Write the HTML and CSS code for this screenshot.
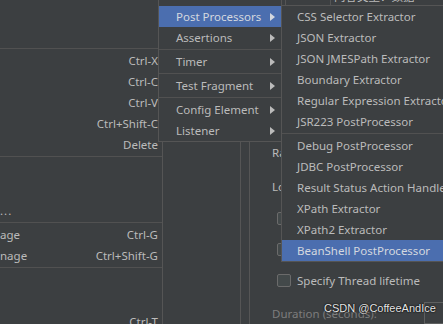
FILE: index.html
```html
<!DOCTYPE html>
<html lang="en">
<head>
    <meta charset="UTF-8">
    <meta name="viewport" content="width=device-width, initial-scale=1.0">
    <title>Thread Group - Add Post Processor</title>
    <link rel="stylesheet" href="styles.css">
</head>
<body>
    <!-- the editor behind the popup menus -->
    <div class="workspace">
        <div class="tree-pane"></div>
        <div class="splitter"></div>
        <div class="config-pane">
            <div class="table-strip">
                <div class="cell cell-a"></div>
                <div class="cell cell-b"></div>
                <div class="cell cell-c">内容类型：数据</div>
            </div>
            <div class="config-form">
                <div class="field-row">Number of Threads (users):</div>
                <div class="field-row">Ramp-up period (seconds):</div>
                <div class="field-row">Loop Count:</div>
                <div class="check-row"><span class="check-box"></span>Same user on each iteration</div>
                <div class="check-row"><span class="check-box"></span>Delay Thread creation until needed</div>
                <div class="check-row"><span class="check-box"></span>Specify Thread lifetime</div>
                <div class="duration-row">
                    <span class="duration-label">Duration (seconds):</span>
                    <span class="text-field"></span>
                </div>
            </div>
        </div>
    </div>

    <!-- right click menu -->
    <div class="menu edit-menu">
        <div class="menu-spacer"></div>
        <div class="menu-separator"></div>
        <div class="menu-item"><span></span><span>Ctrl-X</span></div>
        <div class="menu-item"><span></span><span>Ctrl-C</span></div>
        <div class="menu-item"><span></span><span>Ctrl-V</span></div>
        <div class="menu-item"><span></span><span>Ctrl+Shift-C</span></div>
        <div class="menu-item"><span></span><span>Delete</span></div>
        <div class="menu-separator"></div>
        <div class="menu-item"></div>
        <div class="menu-item"></div>
        <div class="menu-item"><span class="cut-label">...</span></div>
        <div class="menu-separator"></div>
        <div class="menu-item"><span>age</span><span>Ctrl-G</span></div>
        <div class="menu-item"><span>nage</span><span>Ctrl+Shift-G</span></div>
        <div class="menu-separator"></div>
        <div class="menu-item"></div>
        <div class="menu-item"></div>
        <div class="menu-item"><span></span><span>Ctrl-T</span></div>
    </div>

    <!-- Add submenu -->
    <div class="menu add-menu">
        <div class="menu-item"><span>Pre Processors</span><span class="submenu-arrow"></span></div>
        <div class="menu-item selected"><span>Post Processors</span><span class="submenu-arrow"></span></div>
        <div class="menu-item"><span>Assertions</span><span class="submenu-arrow"></span></div>
        <div class="menu-separator"></div>
        <div class="menu-item"><span>Timer</span><span class="submenu-arrow"></span></div>
        <div class="menu-separator"></div>
        <div class="menu-item"><span>Test Fragment</span><span class="submenu-arrow"></span></div>
        <div class="menu-separator"></div>
        <div class="menu-item"><span>Config Element</span><span class="submenu-arrow"></span></div>
        <div class="menu-item"><span>Listener</span><span class="submenu-arrow"></span></div>
    </div>

    <!-- Post Processors submenu -->
    <div class="menu post-menu">
        <div class="menu-item">CSS Selector Extractor</div>
        <div class="menu-item">JSON Extractor</div>
        <div class="menu-item">JSON JMESPath Extractor</div>
        <div class="menu-item">Boundary Extractor</div>
        <div class="menu-item">Regular Expression Extractor</div>
        <div class="menu-item">JSR223 PostProcessor</div>
        <div class="menu-separator"></div>
        <div class="menu-item">Debug PostProcessor</div>
        <div class="menu-item">JDBC PostProcessor</div>
        <div class="menu-item">Result Status Action Handler</div>
        <div class="menu-item">XPath Extractor</div>
        <div class="menu-item">XPath2 Extractor</div>
        <div class="menu-item selected">BeanShell PostProcessor</div>
    </div>

    <div class="watermark">CSDN @CoffeeAndIce</div>
</body>
</html>
```

FILE: styles.css
```css
body {
    margin: 0;
    width: 443px;
    height: 324px;
    overflow: hidden;
    position: relative;
    background: #3c3f41;
    color: #bbbbbb;
    font-family: "Noto Sans", "Open Sans", sans-serif;
    font-size: 11.5px;
}

/* editor in the background */
.workspace {
    display: flex;
    height: 324px;
}

.tree-pane {
    flex-shrink: 0;
    width: 240px;
    border-right: 1px solid #555555;
}

.splitter {
    flex-shrink: 0;
    width: 8px;
}

.config-pane {
    flex: 1;
    min-width: 0;
    overflow: hidden;
    border-left: 1px solid #555555;
    white-space: nowrap;
}

.table-strip {
    display: flex;
    height: 19px;
    margin-top: -14px;
}

.cell-a {
    flex-shrink: 0;
    width: 35px;
    border-right: 1px solid #555555;
}

.cell-b {
    flex-shrink: 0;
    width: 44px;
    border-right: 1px solid #555555;
}

.cell-c {
    padding-left: 3px;
    line-height: 20px;
    font-family: "Noto Sans CJK SC", sans-serif;
}

.config-form {
    padding: 96px 0 0 22px;
}

.field-row {
    height: 34px;
    display: flex;
    align-items: center;
}

.check-row {
    height: 31px;
    display: flex;
    align-items: center;
    gap: 6px;
    padding-left: 5px;
}

.check-box {
    flex-shrink: 0;
    width: 12px;
    height: 11px;
    border: 1px solid #6b6b6b;
    border-radius: 2px;
    background: #43494a;
}

.duration-row {
    margin-top: 6px;
    height: 22px;
    display: flex;
    align-items: center;
    color: #7d7d7d;
}

.duration-label {
    flex-shrink: 0;
    width: 152px;
}

.text-field {
    flex-shrink: 0;
    width: 60px;
    height: 20px;
    border: 1px solid #5e6060;
}

/* popup menus */
.menu {
    position: absolute;
    background: #3c3f41;
    border: 1px solid #555555;
}

.menu-item {
    height: 21px;
    display: flex;
    align-items: center;
    justify-content: space-between;
    white-space: nowrap;
}

.menu-separator {
    height: 1px;
    margin: 1px 0;
    background: #515151;
}

.menu-item.selected {
    background: #4b6eaf;
    color: #d4d8df;
}

.edit-menu {
    left: 0;
    top: 0;
    width: 162px;
    height: 340px;
    border-width: 0 1px 0 0;
}

.menu-spacer {
    height: 47px;
}

.edit-menu .menu-item {
    padding-right: 4px;
}

.cut-label {
    letter-spacing: 1px;
}

.add-menu {
    left: 158px;
    top: -16px;
    width: 122px;
}

.add-menu .menu-item {
    padding: 0 6px 0 17px;
}

.submenu-arrow {
    width: 0;
    height: 0;
    border-left: 5px solid currentColor;
    border-top: 4px solid transparent;
    border-bottom: 4px solid transparent;
}

.post-menu {
    left: 281px;
    top: 5px;
    width: 200px;
}

.post-menu .menu-item {
    justify-content: flex-start;
    padding-left: 15px;
}

.watermark {
    position: absolute;
    left: 324px;
    top: 302px;
    white-space: nowrap;
    font-family: "Liberation Sans", sans-serif;
    font-size: 11px;
    color: #e6e6e6;
    text-shadow: 0 0 2px #000000, 0 0 1px #000000;
}
```
